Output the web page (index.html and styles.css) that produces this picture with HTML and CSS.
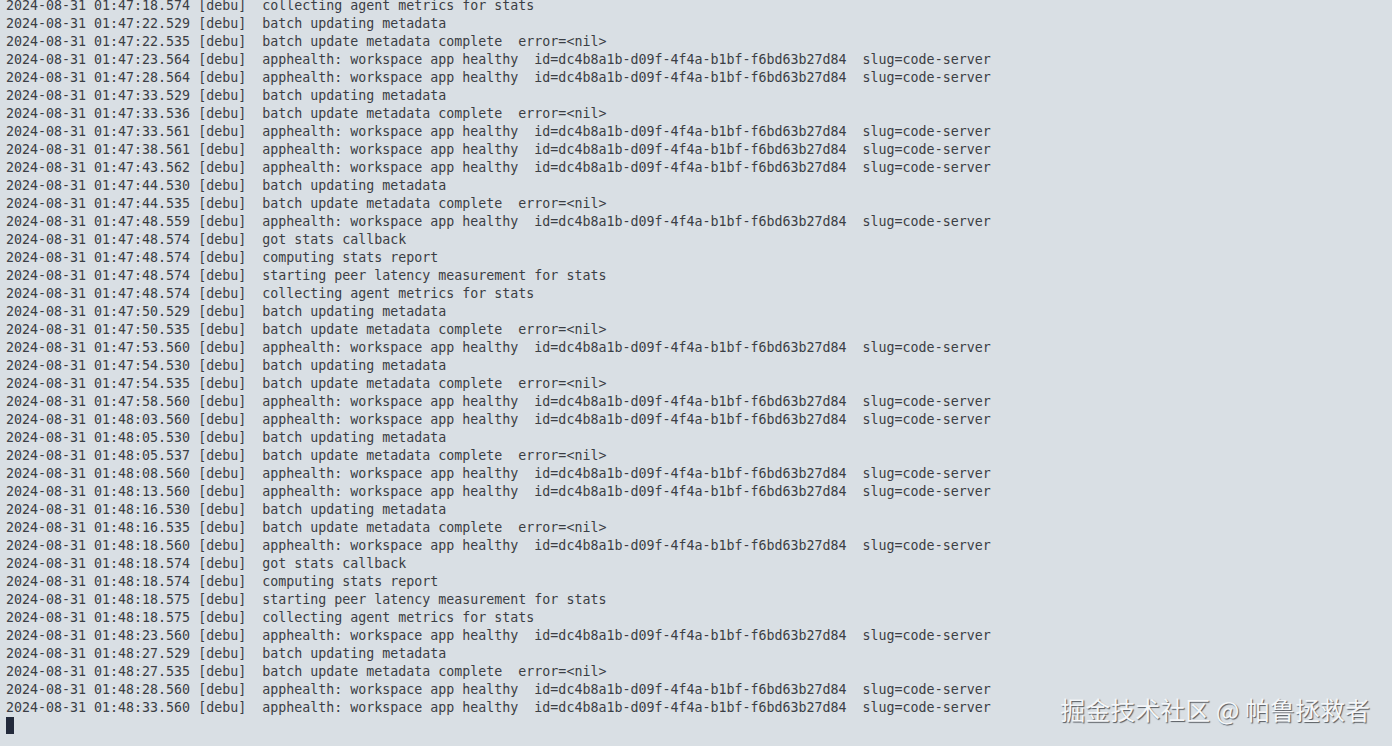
FILE: index.html
```html
<!DOCTYPE html>
<html>
<head>
	<meta charset="UTF-8" />
	<title>agent log</title>
	<link rel="stylesheet" href="styles.css">
</head>
<body>

<pre class="log">2024-08-31 01:47:18.574 [debu]  collecting agent metrics for stats
2024-08-31 01:47:22.529 [debu]  batch updating metadata
2024-08-31 01:47:22.535 [debu]  batch update metadata complete  error=&lt;nil&gt;
2024-08-31 01:47:23.564 [debu]  apphealth: workspace app healthy  id=dc4b8a1b-d09f-4f4a-b1bf-f6bd63b27d84  slug=code-server
2024-08-31 01:47:28.564 [debu]  apphealth: workspace app healthy  id=dc4b8a1b-d09f-4f4a-b1bf-f6bd63b27d84  slug=code-server
2024-08-31 01:47:33.529 [debu]  batch updating metadata
2024-08-31 01:47:33.536 [debu]  batch update metadata complete  error=&lt;nil&gt;
2024-08-31 01:47:33.561 [debu]  apphealth: workspace app healthy  id=dc4b8a1b-d09f-4f4a-b1bf-f6bd63b27d84  slug=code-server
2024-08-31 01:47:38.561 [debu]  apphealth: workspace app healthy  id=dc4b8a1b-d09f-4f4a-b1bf-f6bd63b27d84  slug=code-server
2024-08-31 01:47:43.562 [debu]  apphealth: workspace app healthy  id=dc4b8a1b-d09f-4f4a-b1bf-f6bd63b27d84  slug=code-server
2024-08-31 01:47:44.530 [debu]  batch updating metadata
2024-08-31 01:47:44.535 [debu]  batch update metadata complete  error=&lt;nil&gt;
2024-08-31 01:47:48.559 [debu]  apphealth: workspace app healthy  id=dc4b8a1b-d09f-4f4a-b1bf-f6bd63b27d84  slug=code-server
2024-08-31 01:47:48.574 [debu]  got stats callback
2024-08-31 01:47:48.574 [debu]  computing stats report
2024-08-31 01:47:48.574 [debu]  starting peer latency measurement for stats
2024-08-31 01:47:48.574 [debu]  collecting agent metrics for stats
2024-08-31 01:47:50.529 [debu]  batch updating metadata
2024-08-31 01:47:50.535 [debu]  batch update metadata complete  error=&lt;nil&gt;
2024-08-31 01:47:53.560 [debu]  apphealth: workspace app healthy  id=dc4b8a1b-d09f-4f4a-b1bf-f6bd63b27d84  slug=code-server
2024-08-31 01:47:54.530 [debu]  batch updating metadata
2024-08-31 01:47:54.535 [debu]  batch update metadata complete  error=&lt;nil&gt;
2024-08-31 01:47:58.560 [debu]  apphealth: workspace app healthy  id=dc4b8a1b-d09f-4f4a-b1bf-f6bd63b27d84  slug=code-server
2024-08-31 01:48:03.560 [debu]  apphealth: workspace app healthy  id=dc4b8a1b-d09f-4f4a-b1bf-f6bd63b27d84  slug=code-server
2024-08-31 01:48:05.530 [debu]  batch updating metadata
2024-08-31 01:48:05.537 [debu]  batch update metadata complete  error=&lt;nil&gt;
2024-08-31 01:48:08.560 [debu]  apphealth: workspace app healthy  id=dc4b8a1b-d09f-4f4a-b1bf-f6bd63b27d84  slug=code-server
2024-08-31 01:48:13.560 [debu]  apphealth: workspace app healthy  id=dc4b8a1b-d09f-4f4a-b1bf-f6bd63b27d84  slug=code-server
2024-08-31 01:48:16.530 [debu]  batch updating metadata
2024-08-31 01:48:16.535 [debu]  batch update metadata complete  error=&lt;nil&gt;
2024-08-31 01:48:18.560 [debu]  apphealth: workspace app healthy  id=dc4b8a1b-d09f-4f4a-b1bf-f6bd63b27d84  slug=code-server
2024-08-31 01:48:18.574 [debu]  got stats callback
2024-08-31 01:48:18.574 [debu]  computing stats report
2024-08-31 01:48:18.575 [debu]  starting peer latency measurement for stats
2024-08-31 01:48:18.575 [debu]  collecting agent metrics for stats
2024-08-31 01:48:23.560 [debu]  apphealth: workspace app healthy  id=dc4b8a1b-d09f-4f4a-b1bf-f6bd63b27d84  slug=code-server
2024-08-31 01:48:27.529 [debu]  batch updating metadata
2024-08-31 01:48:27.535 [debu]  batch update metadata complete  error=&lt;nil&gt;
2024-08-31 01:48:28.560 [debu]  apphealth: workspace app healthy  id=dc4b8a1b-d09f-4f4a-b1bf-f6bd63b27d84  slug=code-server
2024-08-31 01:48:33.560 [debu]  apphealth: workspace app healthy  id=dc4b8a1b-d09f-4f4a-b1bf-f6bd63b27d84  slug=code-server
<span class="cursor"></span></pre>

    <div class="watermark">掘金技术社区 @ 帕鲁拯救者</div>

</body>
</html>
```

FILE: styles.css
```css
html, body{
    margin: 0;
    height: 100%;
    background: #d9dfe4;
    overflow: hidden;
}

.log{
    margin: -3px 0 0;
    padding-left: 6px;
    font-family: "DejaVu Sans Mono", "Liberation Mono", monospace;
    font-size: 13.3px;
    line-height: 18px;
    color: #3b3e44;
}

.cursor{
    display: inline-block;
    width: 8px;
    height: 17px;
    vertical-align: -4px;
    background: #232a3b;
}

.watermark{
    position: absolute;
    right: 22px;
    bottom: 23px;
    font-family: "Noto Sans CJK SC", sans-serif;
    font-size: 25px;
    line-height: 28px;
    color: #f4f6f8;
    text-shadow: 1px 1px 1px #55595f;
}
```
